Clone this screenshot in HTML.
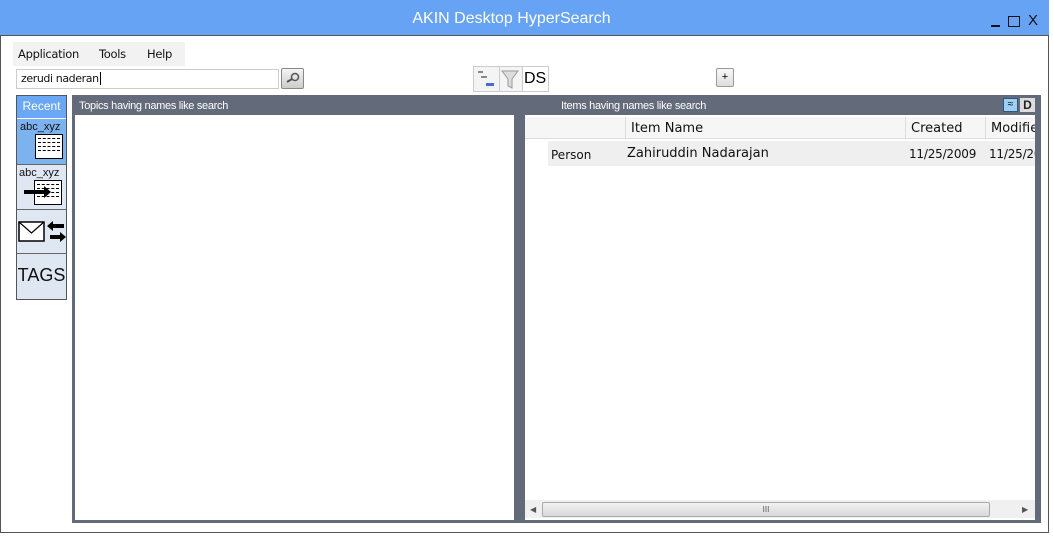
<!DOCTYPE html>
<html><head><style>
*{margin:0;padding:0;box-sizing:border-box}
body{width:1053px;height:536px;background:#fff;position:relative;overflow:hidden;font-family:"Liberation Sans",sans-serif;}
.a{position:absolute}
.seg{font-family:"DejaVu Sans","Liberation Sans",sans-serif}
</style></head><body>
<div class="a" style="left:0;top:0;width:1049px;height:533px;border:1px solid #555;border-top:none"></div>
<div class="a" style="left:0;top:0;width:1049px;height:36px;background:#66a3f5;border-bottom:1px solid #555"></div>
<div class="a" style="left:0;top:10px;width:1023px;text-align:center;color:#fff;font-size:16px">AKIN Desktop HyperSearch</div>
<div class="a" style="left:991px;top:25px;width:9px;height:2px;background:#111"></div>
<div class="a" style="left:1008px;top:16px;width:12px;height:11px;border:1.5px solid #111"></div>
<div class="a" style="left:1028px;top:12px;font-size:15px;color:#111">X</div>
<div class="a" style="left:13px;top:42px;width:172px;height:24px;background:#f2f2f2"></div>
<div class="a seg" style="left:18px;top:47px;font-size:11.5px;color:#111;letter-spacing:-0.3px">Application</div>
<div class="a seg" style="left:99px;top:47px;font-size:11.5px;color:#111;letter-spacing:-0.3px">Tools</div>
<div class="a seg" style="left:147px;top:47px;font-size:11.5px;color:#111;letter-spacing:-0.3px">Help</div>
<div class="a" style="left:16px;top:69px;width:263px;height:20px;border:1px solid #ccc;background:#fff"></div>
<div class="a seg" style="left:21px;top:72px;font-size:11px;color:#111;letter-spacing:-0.4px">zerudi naderan<span style="border-left:1px solid #000;margin-left:1px"></span></div>
<div class="a" style="left:281px;top:68px;width:23px;height:21px;border:1px solid #888;border-radius:2px;background:linear-gradient(#f4f4f4,#ccc)"></div>
<svg class="a" style="left:284px;top:71px" width="18" height="15"><circle cx="11" cy="6" r="3.5" fill="none" stroke="#555" stroke-width="1.5"/><line x1="8" y1="8" x2="3" y2="11" stroke="#555" stroke-width="2"/></svg>
<div class="a" style="left:473px;top:66px;width:76px;height:26px;border:1px solid #ccc;background:#f4f4f4"></div>
<div class="a" style="left:499px;top:67px;width:1px;height:24px;background:#ccc"></div>
<div class="a" style="left:522px;top:67px;width:1px;height:24px;background:#ccc"></div>
<div class="a" style="left:523px;top:67px;width:25px;height:24px;background:#fff"></div>
<div class="a" style="left:478px;top:71px;width:5px;height:2px;background:#888"></div>
<div class="a" style="left:481px;top:76px;width:6px;height:2px;background:#888"></div>
<div class="a" style="left:486px;top:83px;width:8px;height:3px;background:#3f6fd0"></div>
<svg class="a" style="left:501px;top:70px" width="18" height="19"><path d="M1 1H17L11 9V18L7 16V9Z" fill="#ddd" stroke="#999"/></svg>
<div class="a" style="left:524px;top:70px;font-size:16px;color:#000">DS</div>
<div class="a" style="left:716px;top:68px;width:18px;height:19px;border:1px solid #999;border-radius:2px;background:linear-gradient(#f8f8f8,#ddd);font-size:11px;text-align:center;line-height:16px">+</div>
<div class="a" style="left:16px;top:95px;width:51px;height:205px;border:1px solid #555;background:#dfe7f3"></div>
<div class="a" style="left:17px;top:96px;width:49px;height:22px;background:#6aa7f5;color:#fff;font-size:12px;text-align:center;line-height:21px">Recent</div>
<div class="a" style="left:17px;top:118px;width:49px;height:46px;background:#7cb2ee;border-top:1px solid #fff"></div>
<div class="a" style="left:17px;top:164px;width:49px;height:1px;background:#666"></div>
<div class="a" style="left:17px;top:209px;width:49px;height:1px;background:#666"></div>
<div class="a" style="left:17px;top:253px;width:49px;height:1px;background:#666"></div>
<div class="a" style="left:20px;top:121px;font-size:11px;color:#111">abc_xyz</div>
<div class="a" style="left:35px;top:134px;width:28px;height:25px;border:1.5px solid #000;background:#fff;padding:3px 2px"><div style="border-top:1px dashed #000;height:4px"></div><div style="border-top:1px dashed #000;height:4px"></div><div style="border-top:1px dashed #000;height:4px"></div><div style="border-top:1px dashed #000"></div></div>
<div class="a" style="left:19px;top:167px;font-size:11px;color:#111">abc_xyz</div>
<div class="a" style="left:34px;top:180px;width:28px;height:25px;border:1.5px solid #000;background:#fff;padding:3px 2px"><div style="border-top:1px dashed #000;height:4px"></div><div style="border-top:1px dashed #000;height:4px"></div><div style="border-top:1px dashed #000;height:4px"></div><div style="border-top:1px dashed #000"></div></div>
<svg class="a" style="left:24px;top:186px" width="28" height="12"><path d="M0 4H20V0L27 6L20 12V8H0Z" fill="#000"/></svg>
<svg class="a" style="left:18px;top:220px" width="48" height="26"><rect x="1" y="2" width="25" height="19" fill="#fff" stroke="#000" stroke-width="1.5"/><path d="M1 2L13.5 13L26 2" fill="none" stroke="#000" stroke-width="1.2"/><path d="M46 4H35V1L29 6L35 11V8H46Z" fill="#000"/><path d="M32 15H42V12L48 17L42 22V19H32Z" fill="#000"/></svg>
<div class="a" style="left:17px;top:265px;width:49px;text-align:center;font-size:18px;color:#111">TAGS</div>
<div class="a" style="left:72px;top:95px;width:969px;height:428px;background:#636a7a"></div>
<div class="a" style="left:79px;top:100px;font-size:11px;color:#fff;letter-spacing:-0.3px">Topics having names like search</div>
<div class="a" style="left:561px;top:100px;font-size:11px;color:#fff;letter-spacing:-0.3px">Items having names like search</div>
<div class="a" style="left:1003px;top:98px;width:15px;height:14px;background:#9cd0f4;border:1px solid #357;font-size:10px;text-align:center;line-height:12px">≈</div>
<div class="a" style="left:1020px;top:98px;width:15px;height:14px;background:#ddd;font-size:12px;font-weight:bold;text-align:center;line-height:14px;color:#222">D</div>
<div class="a" style="left:75px;top:115px;width:439px;height:405px;background:#fff"></div>
<div class="a" style="left:525px;top:115px;width:510px;height:405px;background:#fff;overflow:hidden">
 <div class="a" style="left:0;top:2px;width:510px;height:22px;background:#f6f6f6;border-bottom:1px solid #ddd"></div>
 <div class="a" style="left:100px;top:2px;width:1px;height:22px;background:#ddd"></div>
 <div class="a" style="left:380px;top:2px;width:1px;height:22px;background:#ddd"></div>
 <div class="a" style="left:460px;top:2px;width:1px;height:22px;background:#ddd"></div>
 <div class="a seg" style="left:106px;top:6px;font-size:13px;color:#111">Item Name</div>
 <div class="a seg" style="left:386px;top:6px;font-size:13px;color:#111">Created</div>
 <div class="a seg" style="left:466px;top:6px;font-size:13px;color:#111;white-space:nowrap">Modified</div>
 <div class="a" style="left:23px;top:26px;width:487px;height:25px;background:#efefef"></div>
 <div class="a seg" style="left:26px;top:33px;font-size:12px;color:#111">Person</div>
 <div class="a seg" style="left:102px;top:31px;font-size:13px;color:#111">Zahiruddin Nadarajan</div>
 <div class="a seg" style="left:384px;top:32px;font-size:12px;color:#111;white-space:nowrap;letter-spacing:-0.2px">11/25/2009</div>
 <div class="a seg" style="left:464px;top:32px;font-size:12px;color:#111;white-space:nowrap;letter-spacing:-0.2px">11/25/2009</div>
 <div class="a" style="left:0;top:385px;width:510px;height:18px;background:#f0f0f0"></div>
 <div class="a" style="left:17px;top:387px;width:448px;height:15px;border:1px solid #aaa;border-radius:2px;background:linear-gradient(#f2f2f2,#d8d8d8);font-size:8px;text-align:center;line-height:13px;color:#555">III</div>
 <div class="a" style="left:5px;top:390px;font-size:8px;color:#555">◀</div>
 <div class="a" style="left:497px;top:390px;font-size:8px;color:#555">▶</div>
</div>
</body></html>
